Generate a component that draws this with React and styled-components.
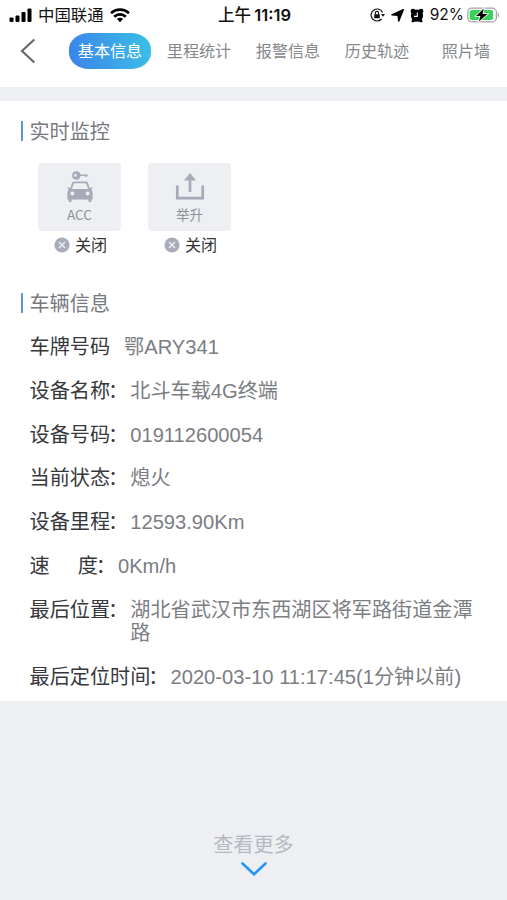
import React from 'react';
import styled, { createGlobalStyle } from 'styled-components';

const GlobalStyle = createGlobalStyle`
  * {
    box-sizing: border-box;
  }

  body {
    margin: 0;
    background: #edeff3;
    font-family: 'Liberation Sans', 'Noto Sans CJK SC', sans-serif;
    color: #77797f;
  }

  p,
  h2 {
    margin: 0;
    font-weight: 400;
  }

  svg {
    display: block;
    flex-shrink: 0;
  }
`;

const Screen = styled.div`
  width: 507px;
  height: 900px;
  display: flex;
  flex-direction: column;
  overflow: hidden;
`;

const Header = styled.header`
  height: 87px;
  background: #fff;
`;

const StatusBar = styled.div`
  height: 28px;
  display: grid;
  grid-template-columns: 1fr auto 1fr;
  align-items: center;
  padding: 0 7px 0 9px;
  color: #111;
  font-size: 16.4px;
  line-height: 28px;
`;

const StatusGroup = styled.div`
  display: flex;
  align-items: center;
  justify-content: ${({ $end }) => ($end ? 'flex-end' : 'flex-start')};
  height: 28px;
`;

const Carrier = styled.span`
  margin: 0 6px 0 5px;
  line-height: 30px;
`;

const Clock = styled.span`
  font-family: Inter, 'Noto Sans CJK SC', sans-serif;
  font-size: 16.5px;
  font-weight: 600;
  line-height: 30px;
  white-space: nowrap;

  span {
    margin-right: -1px;
    font-size: 16.5px;
    font-weight: 500;
  }
`;

const Percent = styled.span`
  margin: 0 3px 0 6px;
  font-family: Inter, sans-serif;
  font-size: 15.5px;
  line-height: 30px;
`;

const Gap = styled.i`
  width: ${({ $size }) => $size}px;
`;

const Nav = styled.nav`
  display: flex;
  align-items: center;
  height: 45px;
  padding-left: 20px;
`;

const BackButton = styled.button`
  width: 49px;
  padding: 0;
  border: none;
  background: transparent;
`;

const Tab = styled.button`
  flex-shrink: 0;
  width: ${({ $width }) => $width}px;
  height: 36px;
  padding: 0;
  border: none;
  border-radius: 20px / 16px;
  font: inherit;
  font-size: 16.1px;
  line-height: 34px;
  color: ${({ $active }) => ($active ? '#fff' : '#85878c')};
  background: ${({ $active }) =>
    $active ? 'linear-gradient(80deg, #3b83ea, #3bc0e6)' : 'transparent'};
`;

const Panel = styled.main`
  height: 600px;
  margin-top: 14px;
  background: #fff;
`;

const SectionTitle = styled.h2`
  display: flex;
  align-items: flex-start;
  gap: 7px;
  height: 22px;
  margin-left: 20.5px;
  font-size: 20.1px;
  line-height: 24px;

  &::before {
    content: '';
    width: 2px;
    height: 20px;
    margin-top: 1px;
    background: #5b95e0;
  }
`;

const Monitor = styled.section`
  padding-top: 19px;
`;

const Sensors = styled.div`
  display: flex;
  gap: 27px;
  margin: 21px 0 0 38px;
`;

const Sensor = styled.div`
  width: 83px;
`;

const SensorCard = styled.div`
  display: flex;
  flex-direction: column;
  align-items: center;
  justify-content: space-between;
  height: 68px;
  padding: 8px 0 8px;
  border-radius: 4px;
  background: #edeff3;
  color: #8d8f99;
  font-family: 'Noto Sans CJK SC', sans-serif;
  font-size: 13.5px;
  line-height: 18px;
`;

const SensorState = styled.div`
  display: flex;
  align-items: center;
  justify-content: center;
  gap: 5px;
  height: 28px;
  padding-left: 2px;
  color: #333;
  font-size: 16.1px;
  line-height: 28px;
`;

const Vehicle = styled.section`
  padding-top: 33px;
`;

const InfoList = styled.div`
  display: flex;
  flex-direction: column;
  gap: 20.8px;
  margin: 22px 0 0 29.5px;
`;

const InfoRow = styled.div`
  display: flex;
  font-size: 20.15px;
  line-height: 23px;
`;

const Label = styled.span`
  flex-shrink: 0;
  color: #36383c;
  margin-right: ${({ $space }) => $space || 0}px;
`;

const Colon = styled.span`
  margin: 0 2px 0 -2px;
`;

const Spacer = styled.span`
  display: inline-block;
  width: 28px;
`;

const Value = styled.span`
  max-width: 346px;
  color: #7b7d83;
`;

const More = styled.footer`
  display: flex;
  flex-direction: column;
  align-items: center;
  gap: 5px;
  margin-top: 133px;
  color: #b6b9c2;
  font-size: 20.1px;
  line-height: 23px;
`;

const SignalIcon = () => (
  <svg width="24" height="15" viewBox="0 0 24 15" fill="#000">
    <rect x="0.5" y="9.5" width="4" height="4.5" rx="1" />
    <rect x="6.5" y="7.5" width="4" height="6.5" rx="1" />
    <rect x="12.5" y="4" width="4" height="10" rx="1" />
    <rect x="18.5" y="0.5" width="4" height="13.5" rx="1" />
  </svg>
);

const WifiIcon = () => (
  <svg width="20" height="15" viewBox="0 0 20 15" fill="none" stroke="#000" strokeWidth="2.7">
    <path d="M1 5.2C6 .4 14 .4 19 5.2" />
    <path d="M4.2 8.7C7.4 5.6 12.6 5.6 15.8 8.7" />
    <path d="M6.9 11C8.7 9.4 11.3 9.4 13.1 11L10 14.2Z" fill="#000" stroke="none" />
  </svg>
);

const RotationLockIcon = () => (
  <svg width="16" height="14" viewBox="0 0 16 14" fill="none" stroke="#111">
    <path d="M11.6 11A6 6 0 1 1 12.6 4.6" strokeWidth="1.2" />
    <path d="M10.9 6h4.2L13 8.8z" fill="#111" stroke="none" />
    <rect x="4.2" y="6.2" width="5.6" height="4.1" rx="0.6" fill="#111" stroke="none" />
    <path d="M5.4 6.5V5a1.6 1.6 0 0 1 3.2 0v1.5" strokeWidth="1.1" />
  </svg>
);

const LocationIcon = () => (
  <svg width="13" height="13" viewBox="0 0 13 13" fill="#000">
    <path d="M12.4.6 7.7 12.2 7 6.3.8 5.8z" stroke="#000" strokeWidth="1.3" strokeLinejoin="round" />
  </svg>
);

const AlarmIcon = () => (
  <svg width="14" height="15" viewBox="0 0 14 15" fill="#000">
    <circle cx="7" cy="7.6" r="6.1" />
    <circle cx="3" cy="3.2" r="2.4" />
    <circle cx="11" cy="3.2" r="2.4" />
    <path d="M1.2 13.2 3.2 10l3 3-3.4 1.5zM12.8 13.2 10.8 10l-3 3 3.4 1.5z" />
    <path d="M7.3 4.5v3.9H4" fill="none" stroke="#fff" strokeWidth="1.1" />
  </svg>
);

const BatteryIcon = () => (
  <svg width="33" height="16" viewBox="0 0 33 16">
    <rect x="0.8" y="1.2" width="28.6" height="13.6" rx="4" fill="#fff" stroke="#a6a6a6" strokeWidth="1.3" />
    <path d="M30.8 5.5c1.8.8 1.8 4.2 0 5z" fill="#a6a6a6" />
    <rect x="2.6" y="3" width="23.5" height="10" rx="2.3" fill="#36d15b" />
    <path
      d="M16.8 1.6 9 9h4.4L11.9 14.5 20.5 7h-5z"
      fill="#000"
      stroke="#fff"
      strokeWidth="1.5"
      paintOrder="stroke"
    />
  </svg>
);

const BackIcon = () => (
  <svg width="16" height="26" viewBox="0 0 16 26" fill="none" stroke="#65676b" strokeWidth="2.1">
    <path d="M14.3 1.5 2 13l12.3 11.5" />
  </svg>
);

const AccIcon = () => (
  <svg width="28" height="32" viewBox="0 0 28 32" fill="#a7aab8">
    <path
      fillRule="evenodd"
      d="M10.5.3a4.1 4.1 0 0 1 4 3.3h7.2v1.5h-1v1h-1.6v-1h-4.6A4.2 4.2 0 1 1 10.5.3zM9.4 3a1.4 1.4 0 1 0 0 2.8 1.4 1.4 0 0 0 0-2.8z"
    />
    <path
      fillRule="evenodd"
      d="M8.3 10.5h11.4c1.4 0 2 .6 2.4 1.7l1.6 5 1.3-.8c1.2-.4 1.8.8.9 1.6l-.9.7c1.1.8 1.6 1.7 1.6 3v6.7h-1.2v1.9c0 1.2-3 1.2-3 0v-1.9H5.6v1.9c0 1.2-3 1.2-3 0v-1.9H1.4v-6.7c0-1.3.5-2.2 1.6-3l-.9-.7c-.9-.8-.3-2 .9-1.6l1.3.8 1.6-5c.4-1.1 1-1.7 2.4-1.7zm.5 1.8c-.7 0-1 .3-1.2.9L5.8 18h16.4l-1.8-4.8c-.2-.6-.5-.9-1.2-.9zM6.4 20.5a2 2 0 1 0 0 4 2 2 0 0 0 0-4zm15.2 0a2 2 0 1 0 0 4 2 2 0 0 0 0-4z"
    />
  </svg>
);

const LiftIcon = () => (
  <svg width="30" height="30" viewBox="0 0 30 30" fill="none" stroke="#a7aab8">
    <path d="M2.3 14.5v12.7h25.4V14.5" strokeWidth="2.7" />
    <path d="M15 21V8" strokeWidth="2.7" />
    <path d="M15 2 21 9.5H9z" fill="#a7aab8" stroke="none" />
  </svg>
);

const CloseIcon = () => (
  <svg width="16" height="16" viewBox="0 0 16 16">
    <circle cx="8" cy="8" r="7.6" fill="#a9acb9" />
    <path d="m5 5 6 6m0-6-6 6" stroke="#edeff3" strokeWidth="1.4" />
  </svg>
);

const ChevronIcon = () => (
  <svg width="26" height="14" viewBox="0 0 26 14" fill="none" stroke="#2695f5" strokeWidth="2.6">
    <path d="m1.5 1.5 11.5 10.8L24.5 1.5" strokeLinecap="round" />
  </svg>
);

const tabs = [
  { name: '基本信息', width: 82, active: true },
  { name: '里程统计', width: 96 },
  { name: '报警信息', width: 82 },
  { name: '历史轨迹', width: 96 },
  { name: '照片墙', width: 82 },
];

const sensors = [
  { name: 'ACC', state: '关闭', icon: <AccIcon /> },
  { name: '举升', state: '关闭', icon: <LiftIcon /> },
];

const info = [
  { label: '车牌号码', value: '鄂ARY341', space: 14, plain: true },
  { label: '设备名称', value: '北斗车载4G终端' },
  { label: '设备号码', value: '019112600054' },
  { label: '当前状态', value: '熄火' },
  { label: '设备里程', value: '12593.90Km' },
  {
    label: (
      <>
        速
        <Spacer />
        度
      </>
    ),
    value: '0Km/h',
  },
  { label: '最后位置', value: '湖北省武汉市东西湖区将军路街道金潭路' },
  { label: '最后定位时间', value: '2020-03-10 11:17:45(1分钟以前)' },
];

export default function App() {
  return (
    <Screen>
      <GlobalStyle />
      <Header>
        <StatusBar>
          <StatusGroup>
            <SignalIcon />
            <Carrier>中国联通</Carrier>
            <WifiIcon />
          </StatusGroup>
          <Clock>
            <span>上午</span> 11:19
          </Clock>
          <StatusGroup $end>
            <RotationLockIcon />
            <Gap $size={5} />
            <LocationIcon />
            <Gap $size={6} />
            <AlarmIcon />
            <Percent>92%</Percent>
            <BatteryIcon />
          </StatusGroup>
        </StatusBar>
        <Nav>
          <BackButton>
            <BackIcon />
          </BackButton>
          {tabs.map(({ name, width, active }) => (
            <Tab key={name} $width={width} $active={active}>
              {name}
            </Tab>
          ))}
        </Nav>
      </Header>

      <Panel>
        <Monitor>
          <SectionTitle>实时监控</SectionTitle>
          <Sensors>
            {sensors.map(({ name, state, icon }) => (
              <Sensor key={name}>
                <SensorCard>
                  {icon}
                  <span>{name}</span>
                </SensorCard>
                <SensorState>
                  <CloseIcon />
                  {state}
                </SensorState>
              </Sensor>
            ))}
          </Sensors>
        </Monitor>

        <Vehicle>
          <SectionTitle>车辆信息</SectionTitle>
          <InfoList>
            {info.map(({ label, value, space, plain }) => (
              <InfoRow key={value}>
                <Label $space={space}>
                  {label}
                  {!plain && <Colon>：</Colon>}
                </Label>
                <Value>{value}</Value>
              </InfoRow>
            ))}
          </InfoList>
        </Vehicle>
      </Panel>

      <More>
        <p>查看更多</p>
        <ChevronIcon />
      </More>
    </Screen>
  );
}
